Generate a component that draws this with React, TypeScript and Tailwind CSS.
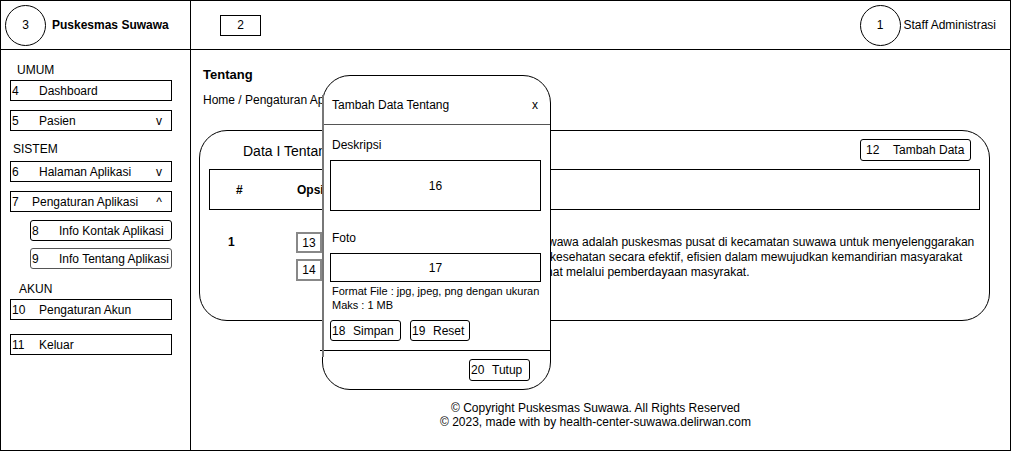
import React from "react";

function SideBox({ num, label, right, indent = false, gray = false, rounded = false, numW = 28 }: { num: string; label: string; right?: string; indent?: boolean; gray?: boolean; rounded?: boolean; numW?: number }) {
  return (
    <div
      className={`flex items-center h-[21px] text-[12px] leading-[14px] ${indent ? "ml-[29px] w-[142px]" : "ml-[9px] w-[162px]"} ${gray ? "border-[1.5px] border-[#555]" : "border border-black"} ${rounded ? "rounded-[3px]" : ""}`}
    >
      <span className="pl-[1px] shrink-0" style={{ width: numW }}>{num}</span>
      <span className="flex-1 whitespace-nowrap">{label}</span>
      {right && <span className="pr-[9px]">{right}</span>}
    </div>
  );
}

export default function App() {
  return (
    <div className="relative w-[1012px] h-[452px] bg-white text-black font-['Liberation_Sans',Arial,sans-serif] text-[12px] leading-[14px]">
      <div className="w-[1011px] h-[451px] border border-black flex flex-col">
        {/* Header */}
        <div className="h-[49px] shrink-0 border-b border-black flex">
          <div className="w-[190px] shrink-0 border-r border-black flex items-center pl-[4px]">
            <div className="w-[41px] h-[41px] rounded-full border border-black flex items-center justify-center text-[12px]">3</div>
            <div className="ml-[6px] font-bold text-[12px]">Puskesmas Suwawa</div>
          </div>
          <div className="flex-1 flex items-center justify-between">
            <div className="ml-[29px] w-[41px] h-[21px] border border-black flex items-center justify-center">2</div>
            <div className="flex items-center mr-[14px]">
              <div className="w-[41px] h-[41px] rounded-full border border-black flex items-center justify-center">1</div>
              <div className="ml-[3px]">Staff Administrasi</div>
            </div>
          </div>
        </div>
        {/* Body */}
        <div className="flex-1 flex">
          <div className="w-[190px] shrink-0 border-r border-black flex flex-col">
            <div className="mt-[13px] ml-[16px]">UMUM</div>
            <div className="mt-[3px]"><SideBox num="4" label="Dashboard" /></div>
            <div className="mt-[9px]"><SideBox num="5" label="Pasien" right="v" /></div>
            <div className="mt-[11px] ml-[12px]">SISTEM</div>
            <div className="mt-[5px]"><SideBox num="6" label="Halaman Aplikasi" right="v" /></div>
            <div className="mt-[9px]"><SideBox num="7" label="Pengaturan Aplikasi" right="^" numW={21} /></div>
            <div className="mt-[8px]"><SideBox num="8" label="Info Kontak Aplikasi" indent rounded /></div>
            <div className="mt-[7px]"><SideBox num="9" label="Info Tentang Aplikasi" indent rounded gray /></div>
            <div className="mt-[13px] ml-[18px]">AKUN</div>
            <div className="mt-[3px]"><SideBox num="10" label="Pengaturan Akun" /></div>
            <div className="mt-[14px]"><SideBox num="11" label="Keluar" /></div>
          </div>
          {/* Main */}
          <div className="flex-1 flex flex-col pl-[8px] pt-[17px]">
            <div className="ml-[4px] text-[13px] font-bold leading-[16px]">Tentang</div>
            <div className="ml-[4px] mt-[10px] whitespace-nowrap">Home / Pengaturan Aplikasi / Tentang</div>
            <div className="mt-[23px] w-[791px] h-[191px] border border-black rounded-[28px] flex flex-col px-[9px] pt-[8px]">
              <div className="flex items-center justify-between h-[22px]">
                <div className="ml-[34px] text-[14px] leading-[16px] mt-[2px]">Data I Tentang</div>
                <div className="mr-[9px] w-[111px] h-[22px] border border-black rounded-[3px] flex items-center">
                  <span className="pl-[5px] w-[32px]">12</span>
                  <span>Tambah Data</span>
                </div>
              </div>
              <div className="mt-[8px] h-[41px] border border-black flex items-center font-bold">
                <div className="w-[87px] pl-[26px]">#</div>
                <div>Opsi</div>
              </div>
              <div className="mt-[22px] flex items-start">
                <div className="w-[87px] pl-[19px] pt-[3px] font-bold">1</div>
                <div className="w-[172px] flex flex-col gap-[6px]">
                  <div className="w-[26px] h-[21px] border-2 border-[#888] flex items-center justify-center">13</div>
                  <div className="w-[26px] h-[22px] border-2 border-[#888] flex items-center justify-center">14</div>
                </div>
                <div className="pt-[3px] leading-[15px] whitespace-nowrap">
                  Puskesmas Suwawa adalah puskesmas pusat di kecamatan suwawa untuk menyelenggarakan
                  <br />
                  pelayanan dan kesehatan secara efektif, efisien dalam mewujudkan kemandirian masyarakat
                  <br />
                  untuk hidup sehat melalui pemberdayaan masyrakat.
                </div>
              </div>
            </div>
            <div className="mt-auto pb-[21px] pr-[18px] text-center">
              <div>© Copyright Puskesmas Suwawa. All Rights Reserved</div>
              <div>© 2023, made with by health-center-suwawa.delirwan.com</div>
            </div>
          </div>
        </div>
      </div>

      {/* Modal */}
      <div className="absolute left-[322px] top-[75px] w-[229px] h-[315px] bg-white border border-black rounded-[28px] flex flex-col">
        <div className="h-[49px] shrink-0 border-b border-[#555] flex items-center justify-between pl-[9px] pr-[12px] pt-[9px]">
          <span>Tambah Data Tentang</span>
          <span>x</span>
        </div>
        <div className="flex flex-col px-[7px]">
          <div className="mt-[13px] ml-[2px]">Deskripsi</div>
          <div className="mt-[8px] w-[211px] h-[51px] border border-black flex items-center justify-center">16</div>
          <div className="mt-[20px] ml-[2px]">Foto</div>
          <div className="mt-[8px] w-[211px] h-[29px] border border-black flex items-center justify-center">17</div>
          <div className="mt-[2px] ml-[2px] text-[11px] leading-[14px] whitespace-nowrap">
            Format File : jpg, jpeg, png dengan ukuran
            <br />
            Maks : 1 MB
          </div>
          <div className="mt-[8px] flex gap-[9px]">
            <div className="w-[71px] h-[21px] border border-black rounded-[3px] flex items-center pl-[1px]">
              <span className="w-[21px]">18</span>Simpan
            </div>
            <div className="w-[60px] h-[21px] border border-black rounded-[3px] flex items-center pl-[1px]">
              <span className="w-[21px]">19</span>Reset
            </div>
          </div>
        </div>
        <div className="mt-[9px] border-t border-black -ml-[3px]" />
        <div className="mt-[8px] flex justify-end pr-[20px]">
          <div className="w-[61px] h-[22px] border border-black rounded-[3px] flex items-center pl-[1px]">
            <span className="w-[21px]">20</span>Tutup
          </div>
        </div>
      </div>
      <div className="absolute left-[322px] top-[95px] w-[2px] h-[262px] bg-[#777]" />
    </div>
  );
}
